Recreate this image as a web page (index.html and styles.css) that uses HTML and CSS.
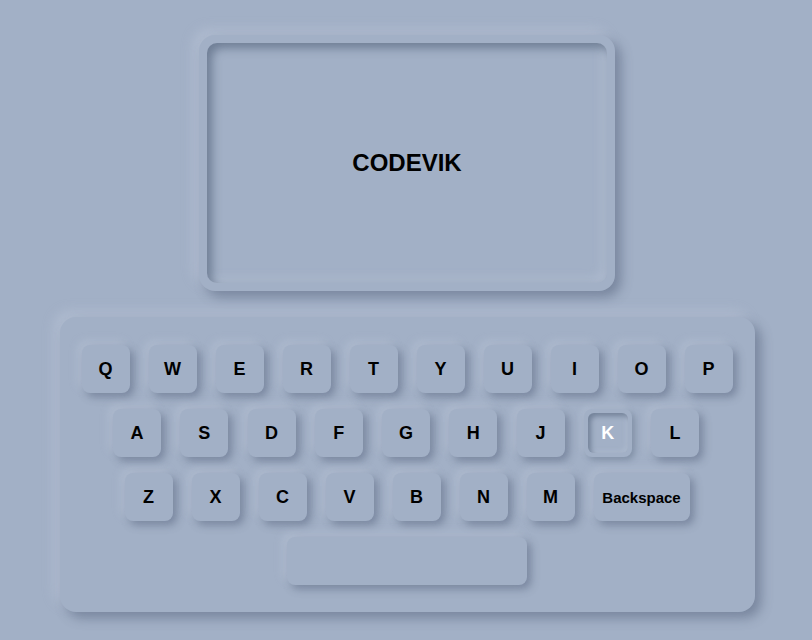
FILE: index.html
```html
<!DOCTYPE html>
<html>
<head>
<meta charset="utf-8">
<link rel="stylesheet" href="styles.css">
</head>
<body>
<div class="page">
  <div class="screen">
    <div class="display">CODEVIK</div>
  </div>
  <div class="keyboard">
    <div class="row">
      <div class="key">Q</div><div class="key">W</div><div class="key">E</div><div class="key">R</div><div class="key">T</div><div class="key">Y</div><div class="key">U</div><div class="key">I</div><div class="key">O</div><div class="key">P</div>
    </div>
    <div class="row row2">
      <div class="key">A</div><div class="key">S</div><div class="key">D</div><div class="key">F</div><div class="key">G</div><div class="key">H</div><div class="key">J</div><div class="key pressed">K</div><div class="key">L</div>
    </div>
    <div class="row">
      <div class="key">Z</div><div class="key">X</div><div class="key">C</div><div class="key">V</div><div class="key">B</div><div class="key">N</div><div class="key">M</div><div class="key wide">Backspace</div>
    </div>
    <div class="row">
      <div class="key space"></div>
    </div>
  </div>
</div>
</body>
</html>
```
FILE: styles.css
```css
html, body {
  margin: 0;
  padding: 0;
  background: #a2b0c6;
  font-family: "Liberation Sans", Arial, sans-serif;
}
.page {
  width: 812px;
  height: 640px;
  display: flex;
  flex-direction: column;
  align-items: center;
  padding-top: 35px;
  box-sizing: border-box;
  gap: 26px;
}
.screen {
  width: 416px;
  height: 256px;
  box-sizing: border-box;
  padding: 8px;
  border-radius: 16px;
  background: #a2b0c6;
  box-shadow: 6px 6px 12px rgba(70, 85, 110, 0.45), -6px -6px 12px rgba(200, 210, 225, 0.35);
  margin-left: 2px;
}
.display {
  width: 100%;
  height: 100%;
  border-radius: 10px;
  display: flex;
  align-items: center;
  justify-content: center;
  font-weight: bold;
  font-size: 24px;
  color: #000;
  box-shadow: inset 5px 5px 10px rgba(70, 85, 110, 0.55), inset -5px -5px 10px rgba(200, 210, 225, 0.3);
}
.keyboard {
  width: 695px;
  height: 295px;
  box-sizing: border-box;
  padding-top: 28px;
  border-radius: 16px;
  background: #a2b0c6;
  box-shadow: 6px 6px 12px rgba(70, 85, 110, 0.45), -6px -6px 12px rgba(200, 210, 225, 0.35);
  display: flex;
  flex-direction: column;
  align-items: center;
  gap: 16px;
  margin-left: 2px;
}
.row {
  display: flex;
  gap: 19px;
}
.row2 {
  gap: 19.25px;
  margin-left: -2px;
}
.key {
  width: 48px;
  height: 48px;
  border-radius: 8px;
  background: #a2b0c6;
  display: flex;
  align-items: center;
  justify-content: center;
  font-weight: bold;
  font-size: 18px;
  color: #000;
  box-shadow: 4px 4px 8px rgba(70, 85, 110, 0.45), -4px -4px 8px rgba(200, 210, 225, 0.35);
}
.key.wide {
  width: 96px;
  font-size: 15px;
}
.key.space {
  width: 240px;
}
.key.pressed {
  color: #fff;
  box-shadow: 3px 3px 6px rgba(70, 85, 110, 0.35), -3px -3px 6px rgba(200, 210, 225, 0.3);
  position: relative;
}
.key.pressed::before {
  content: "";
  position: absolute;
  inset: 4px;
  border-radius: 6px;
  box-shadow: inset 3px 3px 5px rgba(70, 85, 110, 0.5), inset -2px -2px 4px rgba(200, 210, 225, 0.3);
}
```
